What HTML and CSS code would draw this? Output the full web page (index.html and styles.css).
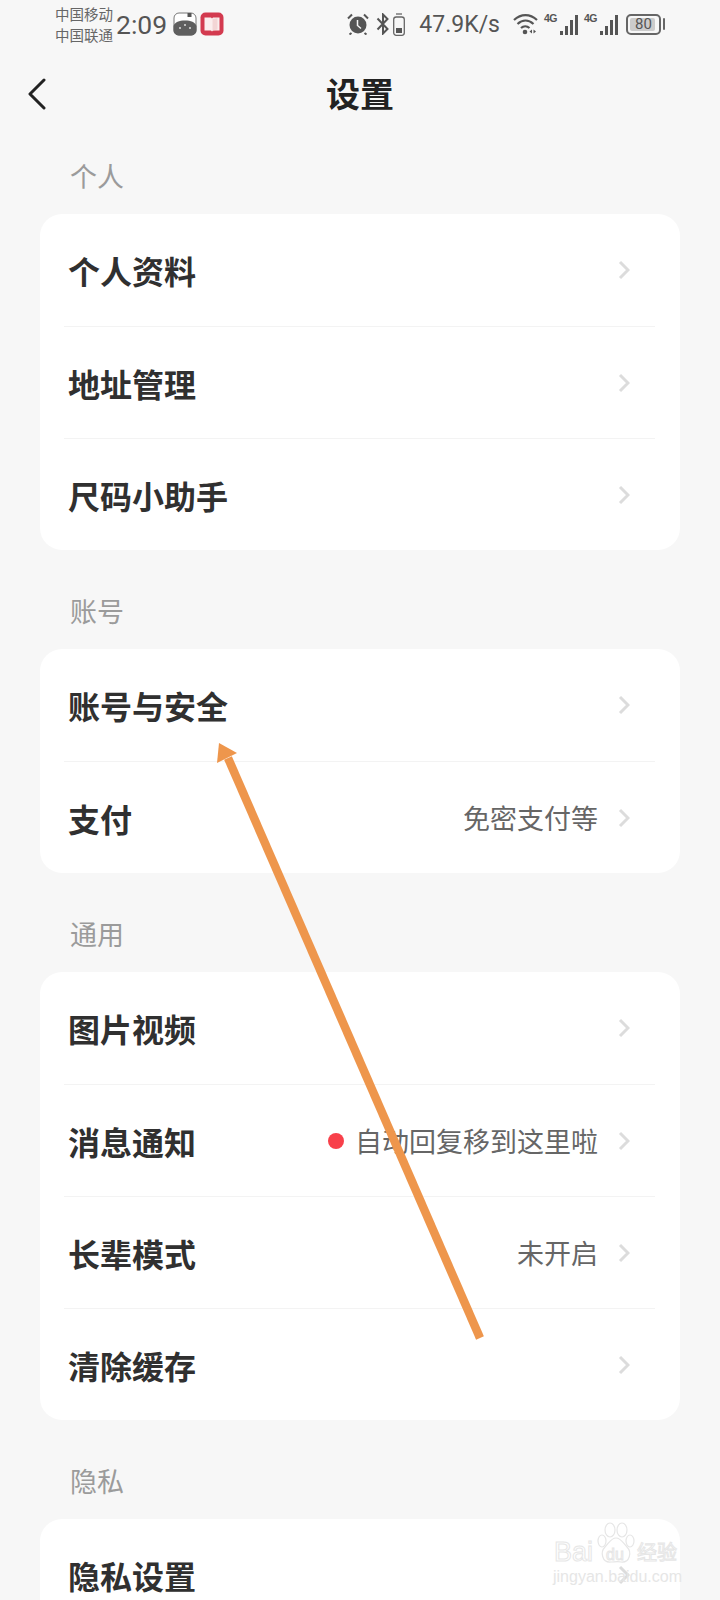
FILE: index.html
```html
<!DOCTYPE html>
<html lang="zh-CN">
<head>
<meta charset="UTF-8">
<meta name="viewport" content="width=device-width, initial-scale=1.0">
<title>设置</title>
<link rel="stylesheet" href="styles.css">
</head>
<body>
<div class="phone">
  <div class="status-bar">
    <div class="carriers"><span>中国移动</span><span>中国联通</span></div>
    <span class="clock">2:09</span>
    <svg class="app-icon" width="24" height="24" viewBox="0 0 24 24">
      <rect x="1" y="1" width="22" height="22" rx="5" fill="#fff" stroke="#777" stroke-width="1"/>
      <path d="M.5 18v-4C2 10 6 8.500 12 8.500S22 10 23.500 14v4a5 5 0 0 1-5 5.500h-13a5 5 0 0 1-5-5.500z" fill="#5f5f5f"/>
      <rect x="14.500" y="1" width="4" height="4" fill="#555"/>
      <circle cx="7" cy="16" r="1" fill="#ddd"/><circle cx="12" cy="13" r="1" fill="#ddd"/><circle cx="17" cy="16" r="1" fill="#ddd"/>
    </svg>
    <svg class="app-icon book" width="24" height="24" viewBox="0 0 24 24">
      <rect x=".5" y=".5" width="23" height="23" rx="5" fill="#d33a4f"/>
      <path d="M4.500 5.500h6.500l1 1 1-1h6.500v13h-6.500l-1 1-1-1H4.500z" fill="#fbeeee"/>
      <path d="M12.500 7l5-1v11.500l-5 1z" fill="#f3d5d5"/>
    </svg>
    <div class="status-right">
      <svg class="ic-alarm" width="22" height="22" viewBox="0 0 22 22" fill="#555">
        <circle cx="11" cy="12" r="8.500"/>
        <path d="M1 5.500L5 1.500M21 5.500L17 1.500M4.500 20l-2 1.500M17.500 20l2 1.500" stroke="#555" stroke-width="2" fill="none"/>
        <path d="M10.500 7v5.500l3.500 3" stroke="#f7f7f7" stroke-width="1.500" fill="none"/>
      </svg>
      <svg class="ic-bt" width="14" height="22" viewBox="0 0 14 22" fill="none" stroke="#555" stroke-width="2">
        <path d="M1.500 5.500l10 10.500-4.500 4.500V1.500L11.500 6l-10 10.500"/>
      </svg>
      <svg class="ic-cell" width="12" height="23" viewBox="0 0 12 23" fill="none" stroke="#666" stroke-width="1.300">
        <rect x=".7" y="4" width="10.600" height="18.300" rx="2.500"/>
        <path d="M3 1h6"/>
        <rect x="3" y="15" width="6" height="5" fill="#555" stroke="none"/>
      </svg>
      <span class="speed">47.9K/s</span>
      <svg class="wifi" width="25" height="22" viewBox="0 0 25 22" fill="none" stroke="#555" stroke-width="2.200">
        <path d="M1 7c7-6.500 16-6.500 23 0M4.500 11c5-4.500 11-4.500 16 0M8 15c2.500-2.200 6-2.200 8.500 0"/>
        <circle cx="12" cy="19" r="2.300" fill="#555" stroke="none"/>
        <path d="M19 16.500v4l-2.500-2zM20.500 16.500v4l2.500-2z" fill="#555" stroke="none"/>
      </svg>
      <div class="signal"><span class="net">4G</span><span class="bars"><i class="b1"></i><i class="b2"></i><i class="b3"></i><i class="b4"></i></span></div>
      <div class="signal"><span class="net">4G</span><span class="bars"><i class="b1"></i><i class="b2"></i><i class="b3"></i><i class="b4"></i></span></div>
      <div class="battery"><span class="level"></span><span class="pct">80</span></div>
      <span class="battery-nub"></span>
    </div>
  </div>

  <div class="header">
    <svg class="back" width="20" height="32" viewBox="0 0 20 32" fill="none" stroke="#222" stroke-width="3" stroke-linecap="round" stroke-linejoin="round">
      <path d="M17 2L3 16l14 14"/>
    </svg>
    <h1>设置</h1>
  </div>

  <div class="group-label">个人</div>
  <div class="card">
    <div class="row"><span class="name">个人资料</span><svg class="chev" width="12" height="20" viewBox="0 0 12 20"><path d="M2 2l8 8-8 8"/></svg></div>
    <div class="row"><span class="name">地址管理</span><svg class="chev" width="12" height="20" viewBox="0 0 12 20"><path d="M2 2l8 8-8 8"/></svg></div>
    <div class="row"><span class="name">尺码小助手</span><svg class="chev" width="12" height="20" viewBox="0 0 12 20"><path d="M2 2l8 8-8 8"/></svg></div>
  </div>

  <div class="group-label">账号</div>
  <div class="card">
    <div class="row"><span class="name">账号与安全</span><svg class="chev" width="12" height="20" viewBox="0 0 12 20"><path d="M2 2l8 8-8 8"/></svg></div>
    <div class="row"><span class="name">支付</span><span class="value">免密支付等</span><svg class="chev" width="12" height="20" viewBox="0 0 12 20"><path d="M2 2l8 8-8 8"/></svg></div>
  </div>

  <div class="group-label">通用</div>
  <div class="card">
    <div class="row"><span class="name">图片视频</span><svg class="chev" width="12" height="20" viewBox="0 0 12 20"><path d="M2 2l8 8-8 8"/></svg></div>
    <div class="row"><span class="name">消息通知</span><span class="dot"></span><span class="value">自动回复移到这里啦</span><svg class="chev" width="12" height="20" viewBox="0 0 12 20"><path d="M2 2l8 8-8 8"/></svg></div>
    <div class="row"><span class="name">长辈模式</span><span class="value">未开启</span><svg class="chev" width="12" height="20" viewBox="0 0 12 20"><path d="M2 2l8 8-8 8"/></svg></div>
    <div class="row"><span class="name">清除缓存</span><svg class="chev" width="12" height="20" viewBox="0 0 12 20"><path d="M2 2l8 8-8 8"/></svg></div>
  </div>

  <div class="group-label">隐私</div>
  <div class="card">
    <div class="row"><span class="name">隐私设置</span><svg class="chev" width="12" height="20" viewBox="0 0 12 20"><path d="M2 2l8 8-8 8"/></svg></div>
  </div>

  <!-- annotation arrow drawn over the screenshot -->
  <svg class="arrow" width="720" height="1600" viewBox="0 0 720 1600">
    <path d="M480 1338L228 758" stroke="#ee964c" stroke-width="8.500" fill="none"/>
    <path d="M219 743L237 753L217 763z" fill="#ee964c"/>
  </svg>

  <div class="watermark">
    <svg class="paw" width="38" height="44" viewBox="0 0 38 44" fill="#fff" stroke="#e6e6e6" stroke-width="1.200">
      <ellipse cx="5" cy="19" rx="4" ry="6"/>
      <ellipse cx="13" cy="8" rx="5" ry="7"/>
      <ellipse cx="25" cy="8" rx="5" ry="7"/>
      <ellipse cx="33" cy="19" rx="4" ry="6"/>
      <path d="M19 16c-5 0-7 5-11 9-5 5-3 16 6 15 3 0 7-1 10 0 9 1 11-10 6-15-4-4-6-9-11-9z"/>
    </svg>
    <span class="wm-bai">Bai</span>
    <span class="wm-du">du</span>
    <span class="wm-cn">经验</span>
    <span class="wm-url">jingyan.baidu.com</span>
  </div>
</div>
</body>
</html>
```

FILE: styles.css
```css
* {
  box-sizing: border-box;
}
body {
  margin: 0;
  background-color: #f7f7f7;
  font-family: "Noto Sans CJK SC", "Noto Sans", sans-serif;
}
.phone {
  position: relative;
  width: 720px;
  height: 1600px;
  overflow: hidden;
  background-color: #f7f7f7;
}

/* status bar */
.status-bar {
  display: flex;
  align-items: center;
  height: 48px;
  padding: 0 55px;
  color: #555;
}
.carriers {
  display: flex;
  flex-direction: column;
  font-size: 14.500px;
  line-height: 21.500px;
  color: #666;
}
.clock {
  margin-left: 3px;
  font-family: Roboto, sans-serif;
  font-size: 26.500px;
}
.app-icon {
  margin-left: 6px;
}
.app-icon.book {
  margin-left: 3px;
}
.status-right {
  display: flex;
  align-items: center;
  margin-left: auto;
}
.ic-bt {
  margin-left: 7px;
}
.ic-cell {
  margin-left: 3px;
}
.speed {
  margin: 0 13px 0 14px;
  font-family: Roboto, sans-serif;
  font-size: 23px;
}
.signal {
  position: relative;
  width: 34px;
  height: 22px;
  margin-left: 6px;
}
.net {
  position: absolute;
  left: 0;
  top: -1px;
  font-family: "Liberation Sans", sans-serif;
  font-size: 10.500px;
  line-height: 12px;
  font-weight: 700;
  letter-spacing: -0.500px;
}
.bars {
  position: absolute;
  right: 0;
  bottom: 0;
  display: flex;
  align-items: flex-end;
  gap: 2px;
}
.bars i {
  width: 3px;
  background: #555;
}
.b1 { height: 4px; }
.b2 { height: 9px; }
.b3 { height: 15px; }
.b4 { height: 20px; }
.battery {
  position: relative;
  display: flex;
  align-items: center;
  justify-content: center;
  width: 35px;
  height: 21px;
  margin-left: 8px;
  border: 2px solid #666;
  border-radius: 5px;
  font-family: Roboto, sans-serif;
  font-size: 15px;
}
.level {
  position: absolute;
  left: 2px;
  top: 2px;
  bottom: 2px;
  width: 80%;
  background: #ccc;
  border-radius: 2px;
}
.pct {
  position: relative;
}
.battery-nub {
  width: 2px;
  height: 12px;
  margin-left: 2px;
  background: #666;
  border-radius: 1px;
}

/* header */
.header {
  position: relative;
  display: flex;
  align-items: center;
  justify-content: center;
  height: 108px;
  padding-bottom: 20px;
}
.back {
  position: absolute;
  left: 27px;
  top: 30px;
}
h1 {
  margin: 0;
  font-size: 34px;
  font-weight: 700;
  color: #222;
}

/* list */
.group-label {
  height: 40px;
  margin: 0 0 18px 70px;
  font-size: 27px;
  line-height: 40px;
  color: #9b9b9b;
}
.card {
  margin: 0 40px 41px;
  padding: 0 25px 0 24px;
  background: #fff;
  border-radius: 22px;
}
.row {
  display: flex;
  align-items: center;
  height: 112px;
  padding-left: 4px;
  border-top: 1px solid #f3f3f3;
}
.row:first-child {
  border-top: 0;
}
.name {
  flex: 1;
  font-size: 32px;
  font-weight: 700;
  color: #303030;
}
.value {
  font-size: 27px;
  color: #666;
}
.dot {
  width: 16px;
  height: 16px;
  margin-right: 11px;
  border-radius: 50%;
  background: #f8404a;
}
.chev {
  margin: 0 25px 0 20px;
  fill: none;
  stroke: #dcdcdc;
  stroke-width: 3;
}

/* overlays */
.arrow {
  position: absolute;
  left: 0;
  top: 0;
}
.watermark {
  position: absolute;
  left: 552px;
  top: 1520px;
  width: 168px;
  height: 80px;
}
.paw {
  position: absolute;
  left: 45px;
  top: 2px;
}
.wm-bai,
.wm-du,
.wm-cn {
  position: absolute;
  color: #fff;
  -webkit-text-stroke: 1px #e6e6e6;
}
.wm-bai {
  left: 2px;
  top: 21px;
  font-family: "Liberation Sans", sans-serif;
  font-size: 27px;
  line-height: 22px;
}
.wm-du {
  left: 54px;
  top: 24px;
  font-family: "Liberation Sans", sans-serif;
  font-size: 16px;
  line-height: 22px;
}
.wm-cn {
  left: 85px;
  top: 21px;
  font-size: 20px;
  line-height: 22px;
}
.wm-url {
  position: absolute;
  left: 1px;
  top: 48px;
  font-family: "Liberation Sans", sans-serif;
  font-size: 16px;
  line-height: 18px;
  color: #e6e6e6;
}
```
